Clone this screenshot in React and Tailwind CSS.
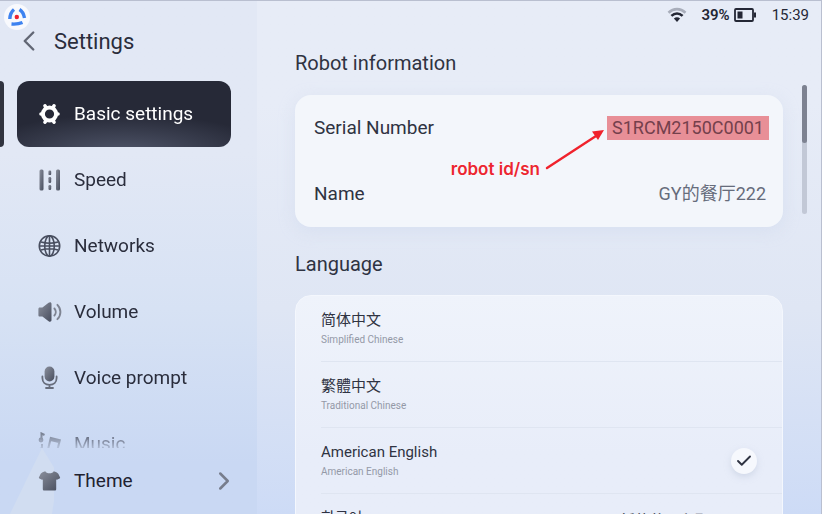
import React, { useState } from 'react';
import { Check, ChevronLeft, ChevronRight } from 'lucide-react';

const languages = [
  { id: 'zh-CN', name: '简体中文', sub: 'Simplified Chinese' },
  { id: 'zh-TW', name: '繁體中文', sub: 'Traditional Chinese' },
  { id: 'en-US', name: 'American English', sub: 'American English' },
  { id: 'ko-KR', name: '한국어', sub: 'Korean', note: '暂停使用和配置' },
];

const Gradient = ({ id }) => (
  <defs>
    <linearGradient id={id} x1="0" y1="0" x2="1" y2="1">
      <stop offset="0" stopColor="#8b909d" />
      <stop offset="1" stopColor="#474d5e" />
    </linearGradient>
  </defs>
);

const GearIcon = () => (
  <svg viewBox="0 0 24 24" className="w-6 h-6" fill="none" stroke="#fff">
    <circle cx="11.5" cy="12" r="6.6" strokeWidth="4" />
    <path
      d="M8 5.600 7 3.900M15 5.600 16 3.900M18.500 12H20M4.500 12H3M15 18.400l1 1.700M8 18.400l-1 1.700"
      strokeWidth="3.6"
      strokeLinecap="round"
    />
  </svg>
);

const SpeedIcon = () => (
  <svg viewBox="0 0 24 24" className="w-6 h-6" fill="url(#g-speed)">
    <Gradient id="g-speed" />
    <rect x="1.5" y="1.5" width="4" height="21" rx="1.5" />
    <rect x="18" y="1.5" width="4" height="21" rx="1.5" />
    <rect x="10.4" y="2.5" width="2.8" height="4.6" rx="1.2" />
    <rect x="10.4" y="9" width="2.8" height="6" rx="1.2" />
    <rect x="10.4" y="17" width="2.8" height="5" rx="1.2" />
  </svg>
);

const GlobeIcon = () => (
  <svg viewBox="0 0 24 24" className="w-6 h-6" fill="none" stroke="#484e5f" strokeWidth="1.6">
    <circle cx="11.5" cy="12" r="10.2" />
    <ellipse cx="11.5" cy="12" rx="4.8" ry="10.2" />
    <path d="M11.5 1.8v20.4M1.3 12h20.4M2.9 8C8 9.4 15 9.4 20.1 8M2.9 16C8 14.6 15 14.6 20.1 16" />
  </svg>
);

const VolumeIcon = () => (
  <svg viewBox="0 0 24 24" className="w-6 h-6">
    <Gradient id="g-volume" />
    <path
      fill="url(#g-volume)"
      d="M1.8 7.4h2.6l6.2-4.6c1.4-1 2.9-.5 2.9 1.2v16c0 1.7-1.5 2.2-2.9 1.2l-6.2-4.6H1.8C.8 16.600.4 16 .4 15V9c0-1 .4-1.600 1.400-1.600z"
    />
    <path
      d="M16.400 8.500c1.800 2 1.800 5 0 7M19.400 4.800c4 4 4 10.400 0 14.400"
      fill="none"
      stroke="#7e8492"
      strokeWidth="1.9"
      strokeLinecap="round"
    />
  </svg>
);

const MicIcon = () => (
  <svg viewBox="0 0 24 24" className="w-6 h-6">
    <Gradient id="g-mic" />
    <rect x="6.6" y="0.5" width="9.8" height="15" rx="4.9" fill="url(#g-mic)" />
    <path
      d="M4.4 10.500v1.500c0 4.200 3 6.800 7.100 6.800s7.100-2.600 7.100-6.800v-1.500M11.500 19v3M8 22h7"
      fill="none"
      stroke="#676d7c"
      strokeWidth="1.8"
      strokeLinecap="round"
    />
  </svg>
);

const MusicIcon = () => (
  <svg viewBox="0 0 24 24" className="w-6 h-6" fill="none" stroke="#5b6170" strokeWidth="2">
    <path d="M3.500 8V1.500L6.500 3M9.500 19.500 12.800 6l9 2.200-3 12.300" />
    <path d="M12.500 7.500l8.500 2" strokeWidth="3" />
    <circle cx="3" cy="8" r="1.4" />
    <path d="M4 12v6" />
    <circle cx="3" cy="18" r="1.4" />
    <circle cx="8" cy="19.5" r="1.8" />
    <circle cx="17" cy="20.5" r="1.8" />
  </svg>
);

const ShirtIcon = () => (
  <svg viewBox="0 0 24 24" className="w-6 h-6">
    <Gradient id="g-shirt" />
    <path
      fill="url(#g-shirt)"
      d="M7.300 2.200c1 2.700 7.400 2.700 8.400 0 2 .4 3.600 1.200 4.600 2.600L22 8.200c.3.600.1 1-.4 1.300L19 10.800l-.8-.4V20c0 1-.5 1.500-1.500 1.500H6.300c-1 0-1.500-.5-1.500-1.500v-9.600l-.8.4-2.600-1.300C.9 9.200.7 8.800 1 8.200l1.700-3.400c1-1.400 2.600-2.200 4.600-2.600z"
    />
  </svg>
);

const WifiIcon = () => (
  <svg viewBox="0 0 20 16" className="w-5 h-4" fill="none" strokeWidth="2.6">
    <path d="M1.500 5.800c5-4.900 12-4.900 17 0" stroke="#a9aebb" />
    <path d="M4.400 8.900c3.400-3.200 7.800-3.200 11.200 0" stroke="#242735" />
    <path d="M6.900 11.400c1.900-1.700 4.300-1.700 6.200 0L10 15z" fill="#242735" />
  </svg>
);

const BatteryIcon = () => (
  <svg viewBox="0 0 22 14" className="w-[22px] h-[14px]">
    <rect x="1" y="1" width="18" height="12" rx="1" fill="none" stroke="#242735" strokeWidth="1.8" />
    <rect x="3.5" y="3.5" width="5" height="7" fill="#242735" />
    <rect x="20" y="4.5" width="2" height="5" fill="#242735" />
  </svg>
);

const Logo = () => (
  <svg viewBox="0 0 26 26" className="absolute left-1 top-[3px] w-[26px] h-[26px]">
    <circle cx="13" cy="13" r="13" fill="#f8f9fd" />
    <g fill="none" stroke="#3d82f0" strokeWidth="3.4">
      <path d="M10 5.500C7.500 7.500 6 10.500 5.800 15" />
      <path d="M15.500 5.500c2.500 1.500 4.300 4.500 5 8.500" />
      <path d="M7.500 20c4 .3 7.500 0 11-1.500" />
    </g>
    <circle cx="12.8" cy="13" r="2.2" fill="#ee2230" />
  </svg>
);

const menu = [
  { id: 'basic', label: 'Basic settings', icon: GearIcon },
  { id: 'speed', label: 'Speed', icon: SpeedIcon },
  { id: 'networks', label: 'Networks', icon: GlobeIcon },
  { id: 'volume', label: 'Volume', icon: VolumeIcon },
  { id: 'voice', label: 'Voice prompt', icon: MicIcon },
  { id: 'music', label: 'Music', icon: MusicIcon },
];

const Sidebar = ({ active, onSelect }) => (
  <aside className="relative flex flex-col w-[257px] shrink-0 bg-linear-to-b from-[#e2e8f5] from-30% via-[#d7e2f4] via-60% to-[#c9d8f3] to-90%">
    <Logo />
    {/* faint beam of light in the corner */}
    <svg viewBox="0 0 44 66" className="absolute left-[10px] bottom-0 w-11 h-[66px]">
      <path d="M32 0 0 66h42l6-40z" fill="#d1ddf1" />
    </svg>

    <header className="flex items-center gap-2 h-20 shrink-0 pl-3">
      <button className="text-[#626775]" aria-label="Back">
        <ChevronLeft size={34} strokeWidth={1.7} />
      </button>
      <h1 className="text-[22px] text-[#2a2d3c]">Settings</h1>
    </header>

    <nav className="flex-1 min-h-0 overflow-hidden mask-b-from-[345px] mask-b-to-[372px]">
      {menu.map(({ id, label, icon: Icon }) => (
        <div key={id} className="relative pl-[17px] pr-[26px]">
          {active === id && <span className="absolute left-0 inset-y-0 w-1 bg-[#30333f] rounded-r" />}
          <button
            onClick={() => onSelect(id)}
            className={`flex items-center gap-3 w-full h-[66px] pl-[21px] rounded-xl text-[19px] ${
              active === id
                ? 'text-white bg-radial-[70%_60%_at_50%_110%] from-[#50566a] to-[#262937]'
                : 'text-[#2a2d3c]'
            }`}
          >
            <Icon />
            <span>{label}</span>
          </button>
        </div>
      ))}
    </nav>

    <button className="relative flex items-center gap-3 h-[66px] shrink-0 pl-[38px] pr-[18px] text-[19px] text-[#1f2230]">
      <ShirtIcon />
      <span className="flex-1 text-left">Theme</span>
      <ChevronRight size={30} strokeWidth={2} className="text-[#777d8c]" />
    </button>
  </aside>
);

const StatusBar = () => (
  <div className="flex items-center justify-end h-7 shrink-0 pr-3 text-[#242735]">
    <WifiIcon />
    <span className="ml-[14px] mr-1 text-[15px] font-semibold">39%</span>
    <BatteryIcon />
    <span className="ml-4 text-[15px]">15:39</span>
  </div>
);

const App = () => {
  const [active, setActive] = useState('basic');
  const [language, setLanguage] = useState('en-US');

  return (
    <div className="flex h-screen overflow-hidden border-t border-r border-[#b9bfd0] font-[Roboto,'Noto_Sans_CJK_SC',sans-serif] text-[#2f3342]">
      <Sidebar active={active} onSelect={setActive} />

      <main className="relative flex flex-col flex-1 min-w-0 bg-linear-to-b from-[#e7ecf7] from-20% via-[#dfe6f4] via-60% to-[#cddbf6]">
        <StatusBar />

        <div className="flex-1 min-h-0 overflow-hidden px-[38px]">
          <h2 className="h-[66px] pt-5 text-xl">Robot information</h2>
          <dl className="relative rounded-2xl bg-[#f3f6fb] shadow-[0_4px_16px_#c8d2ea60] pl-[19px] pr-[17px]">
            <div className="flex items-center justify-between h-[66px]">
              <dt className="text-[19px]">Serial Number</dt>
              <dd className="-mr-[3px] px-[5px] text-lg leading-6 bg-[#e88f97] text-[#74404c]">S1RCM2150C0001</dd>
            </div>
            <div className="flex items-center justify-between h-[66px]">
              <dt className="text-[19px]">Name</dt>
              <dd className="text-lg text-[#666c7b]">GY的餐厅222</dd>
            </div>

            {/* callout pointing at the serial number */}
            <div className="absolute right-[178px] top-8 flex items-end gap-px">
              <span className="text-[17px] leading-5 font-[Inter] font-semibold text-[#ec2630] text-shadow-[0_0_2px_#fff]">
                robot id/sn
              </span>
              <svg viewBox="0 0 64 44" className="w-16 h-11 mb-2" fill="#f0222c">
                <path d="M6 41 55 9" stroke="#f0222c" strokeWidth="2.4" strokeLinecap="round" />
                <path d="m63 3-6 10-2.500-3.500L51 4.500z" />
              </svg>
            </div>
          </dl>

          <h2 className="h-[68px] pt-[23px] text-xl">Language</h2>
          <ul className="rounded-2xl border border-[#f4f7fd] bg-linear-to-b from-[#eff3fb] to-[#e8edf9] to-60%">
            {languages.map((l) => (
              <li key={l.id} className="ml-[25px] border-b border-[#dfe5f1]">
                <label className="flex items-center justify-between h-[65px] pr-[25px]">
                  <span className="pb-0.5">
                    <span className="block text-[15px] leading-[25px]">{l.name}</span>
                    <span className="block text-[10px] leading-[14px] text-[#9499a7]">{l.sub}</span>
                  </span>
                  <input
                    type="radio"
                    name="language"
                    className="sr-only"
                    checked={language === l.id}
                    onChange={() => setLanguage(l.id)}
                  />
                  {l.note && <span className="self-start pt-4 pr-8 text-[15px] font-medium">{l.note}</span>}
                  {language === l.id && (
                    <span className="flex items-center justify-center w-[26px] h-[26px] rounded-full bg-[#f6f8fd] shadow-[0_3px_6px_#bcc5da80]">
                      <Check size={18} strokeWidth={2.5} />
                    </span>
                  )}
                </label>
              </li>
            ))}
          </ul>
        </div>

        <div className="absolute right-[14px] top-[84px] w-[5px] h-[129px] rounded-full bg-[#c2c8d6]">
          <div className="w-full h-[58px] rounded-full bg-[#7d8291]" />
        </div>
      </main>
    </div>
  );
};

export default App;
